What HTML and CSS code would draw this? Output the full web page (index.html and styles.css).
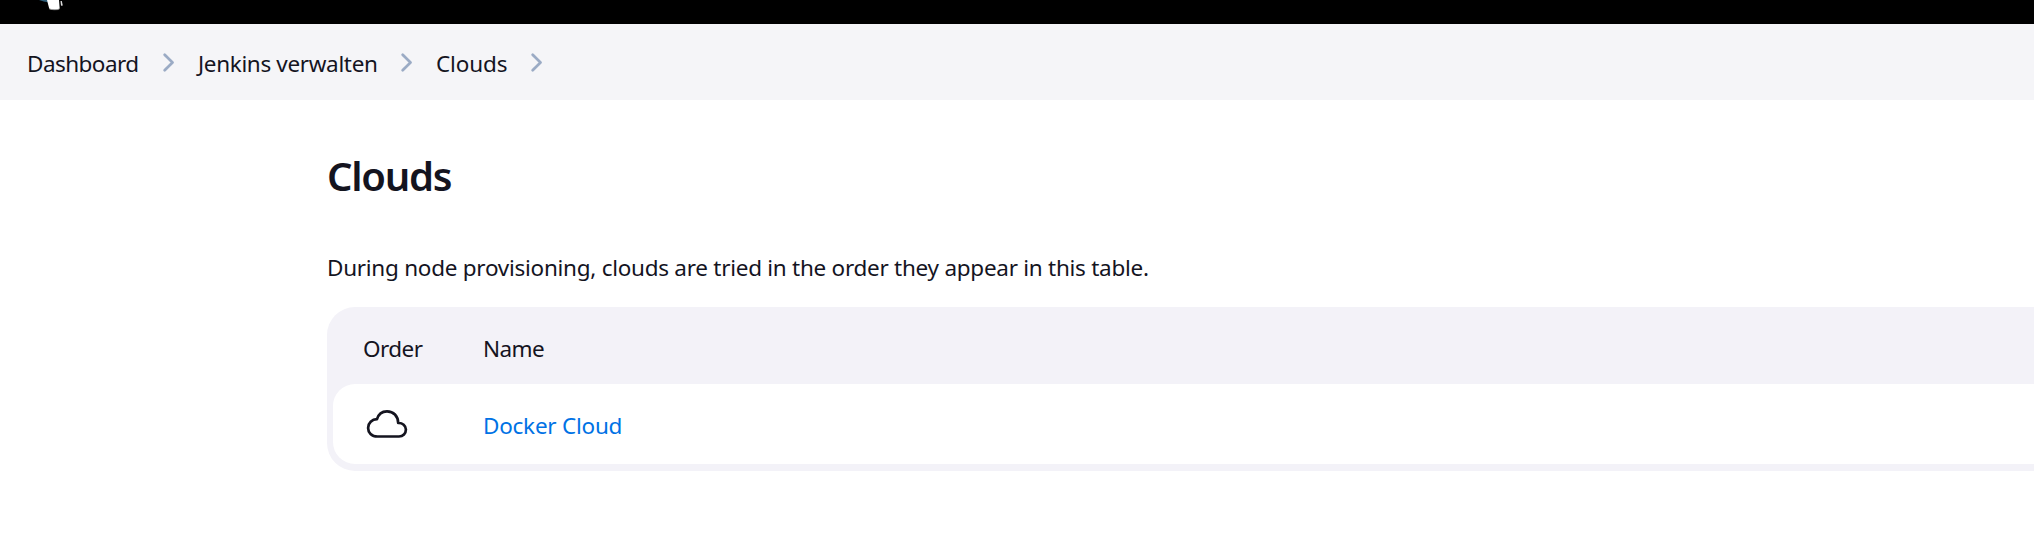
FILE: index.html
```
<!DOCTYPE html>
<html lang="de">
<head>
<meta charset="utf-8">
<title>Clouds</title>
<link rel="stylesheet" href="styles.css">
</head>
<body>
<header class="topbar">
  <svg class="logo" width="30" height="12" viewBox="0 0 30 12"><path d="M0 0h9v2.300Q5 2 0 0z" fill="#2f5f7a"/><path d="M8 0h12l.7 8.500q-1 1.300-5 1.200-4.500 0-5.500-1.200Q9 4 8 0z" fill="#fff"/><path d="M10 8.700q2 1 5 1 4 .2 5.500-.8" fill="none" stroke="#999" stroke-width=".8"/><path d="M21.500 1h1.300l1 4.500-1.800.3z" fill="#ddd"/></svg>
</header>
<nav class="crumbs">
  <a class="c1">Dashboard</a>
  <svg class="chev" width="12" height="19" viewBox="0 0 12 19"><path d="M1.700 1.700 9.500 9.500 1.700 17.300"/></svg>
  <a class="c2">Jenkins verwalten</a>
  <svg class="chev" width="12" height="19" viewBox="0 0 12 19"><path d="M1.700 1.700 9.500 9.500 1.700 17.300"/></svg>
  <a class="c3">Clouds</a>
  <svg class="chev" width="12" height="19" viewBox="0 0 12 19"><path d="M1.700 1.700 9.500 9.500 1.700 17.300"/></svg>
</nav>
<main class="content">
  <h1 class="title">Clouds</h1>
  <p class="desc">During node provisioning, clouds are tried in the order they appear in this table.</p>
  <section class="table">
    <div class="row head"><span class="order">Order</span><span class="name">Name</span></div>
    <div class="row item">
      <span class="order"><svg class="cloud" width="42" height="30" viewBox="0 0 42 30"><path d="M11.500 27.500C5.500 27.500 2.100 23.500 2.100 19C2.100 14 6 10.300 11 10.200C12.300 5.500 16 2.300 21 2.300C27.500 2.300 32 7 32.200 14C36.500 13.700 39.900 16.800 39.900 20.500C39.900 24.500 37 27.500 33 27.500Z"/></svg></span>
      <a class="name">Docker Cloud</a>
    </div>
  </section>
</main>
</body>
</html>
```
FILE: styles.css
```
* { box-sizing: border-box; }
body {
  margin: 0;
  height: 541px;
  overflow: hidden;
  background: #fff;
  color: #14141f;
  font: 22.5px/32px "Noto Sans", "Open Sans", sans-serif;
}
.topbar { height: 24px; padding-left: 39px; background: #000; }
.logo { display: block; }
.crumbs {
  display: flex;
  align-items: center;
  height: 76px;
  padding: 3px 0 0 27px;
  background: #f5f5f8;
  white-space: nowrap;
}
.chev { flex: none; margin-top: -2px; fill: none; stroke: #9babc5; stroke-width: 2.7; stroke-linecap: round; stroke-linejoin: round; }
.c1 { width: 136px; letter-spacing: -0.55px; }
.c2 { width: 203px; margin-left: 23px; letter-spacing: -0.34px; }
.c3 { width: 95px; margin-left: 23px; letter-spacing: -0.15px; }
.content { padding-left: 327px; }
.title { margin: 50px 0 0; font-size: 40px; line-height: 52px; font-weight: 600; letter-spacing: -1.25px; }
.desc { margin: 50px 0 0; height: 55px; letter-spacing: -0.265px; }
.table {
  height: 164px;
  padding-left: 6px;
  background: #f3f2f8;
  border-radius: 28px 0 0 28px;
}
.row { display: flex; align-items: center; padding-left: 30px; }
.head { height: 77px; padding-top: 7px; letter-spacing: -0.55px; }
.item { height: 80px; padding-top: 4px; background: #fff; border-radius: 22px 0 0 22px; letter-spacing: -0.24px; }
.order { width: 120px; }
.cloud { display: block; margin: -4px 0 0 3px; fill: none; stroke: #14141f; stroke-width: 2.7; stroke-linejoin: round; }
.item .name { color: #0072e5; }
```
